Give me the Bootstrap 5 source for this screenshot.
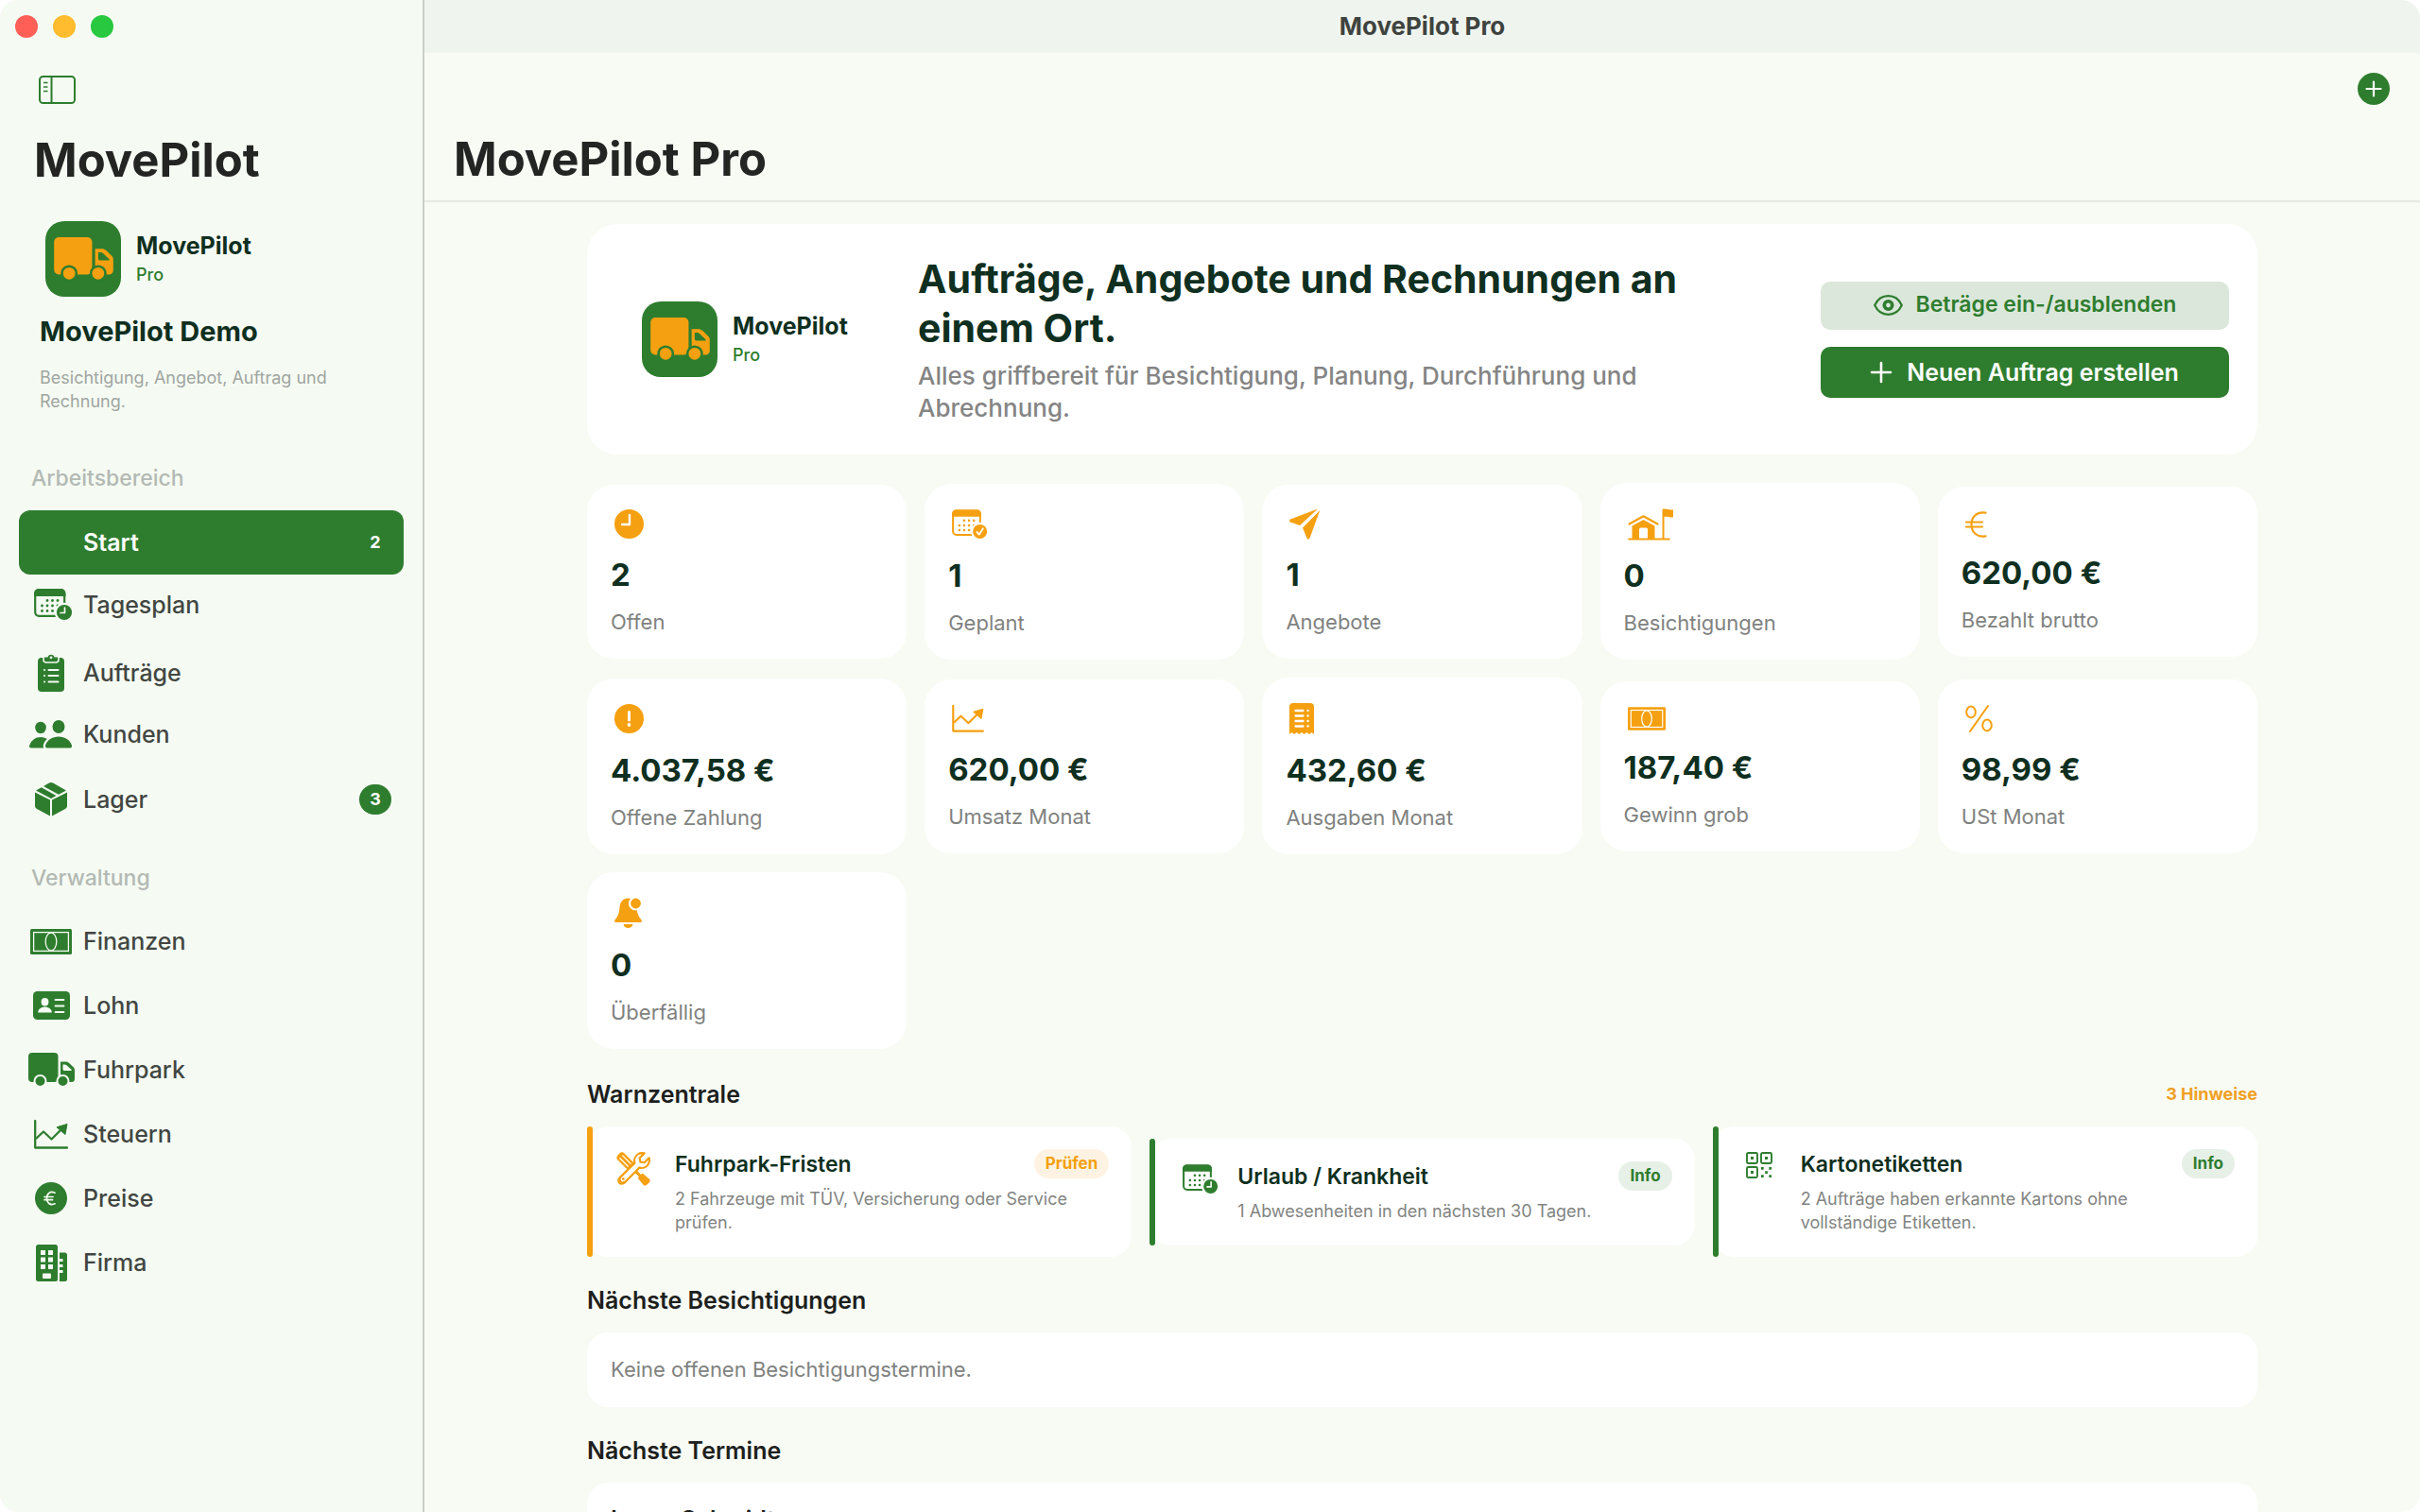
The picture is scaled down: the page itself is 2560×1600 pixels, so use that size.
<!DOCTYPE html>
<html lang="de">
<head>
<meta charset="utf-8">
<meta name="viewport" content="width=device-width, initial-scale=1">
<title>MovePilot Pro</title>
<link rel="stylesheet" href="https://cdn.jsdelivr.net/npm/bootstrap@5.3.0/dist/css/bootstrap.min.css">
<style>
:root{--mp-green:#2e7d2e;--mp-orange:#f5a010;--mp-dark:#0f2f20;--mp-gray:#808280;--mp-side:#f5fbf3;--mp-main:#f8fbf4;--cut:#fff}
body{font-family:Inter,"Liberation Sans",sans-serif;background:#fff;color:#222422;line-height:1.2}
svg{display:block;flex:none;overflow:visible}
.app-window{border-radius:20px;overflow:hidden;background:var(--mp-main)}
.sidebar{width:449px;border-right:2px solid #c9cfc9;background:var(--mp-side);--cut:var(--mp-side)}
.lights{gap:16px;padding:16px 16px 40px}
.light{width:24px;height:24px;border-radius:50%}
.light-r{background:#ff5f57}.light-y{background:#febc2e}.light-g{background:#28c840}
.plain-btn{border:0;background:none;padding:0;color:var(--mp-green)}
.big-title{font-size:49px;font-weight:700;line-height:60px;margin:0;color:#232523}
.app-logo{width:80px;height:80px;border-radius:20px;background:var(--mp-green);color:var(--mp-orange);--cut:var(--mp-green);display:flex;align-items:center;justify-content:center;flex:none}
.logo-name{font-size:25px;font-weight:700;line-height:30px;color:var(--mp-dark)}
.logo-pro{font-size:18px;font-weight:500;line-height:24px;margin-top:4px;color:var(--mp-green)}
.side-tools{padding:0 41px}
.side-title{margin-top:30px;padding:0 36px}
.brand-row{padding:34px 48px 0;gap:16px}
.side-intro{padding:19px 42px 0}
.demo-name{font-size:29px;font-weight:700;line-height:36px;color:var(--mp-dark)}
.side-desc{font-size:18px;line-height:25px;margin-top:18px;color:#a0a5a0}
.side-head{font-size:23px;font-weight:500;line-height:28px;color:#b3b9b3;margin:0;padding:0 33px}
.side-head.head-work{margin-top:55px;margin-bottom:20px}
.side-head.head-admin{margin-top:25px;margin-bottom:19px}
.side-nav{padding:0 20px}
.side-link{height:68px;padding:0 13px 0 9px;gap:9px;border-radius:12px;color:#424642;font-size:25px;font-weight:500;text-decoration:none}
.side-link .ic{width:50px;display:flex;justify-content:center;color:var(--mp-green)}
.side-link.current{background:var(--mp-green);color:#fff;font-weight:600}
.count-pill{min-width:34px;height:32px;border-radius:16px;background:var(--mp-green);color:#fff;font-size:18px;font-weight:700;display:flex;align-items:center;justify-content:center}
.row-mid{height:64px}.row-tall{height:80px}.row-low{height:50px}.row-last{height:88px}
.title-bar{height:56px;background:#eff5ee;font-size:26px;font-weight:700;color:#3f433f}
.page-head{padding:21px 32px 13px 31px;border-bottom:2px solid #e4e9e2}
.content-col{max-width:1767px;width:100%;margin:0 auto;padding-top:23px}
.panel{background:#fff;border-radius:28px}
.hero{padding:30px 30px 30px 58px;border-radius:32px;min-height:244px}
.hero-logo{width:292px}
.hero h2{font-size:41px;font-weight:700;line-height:52px;margin:0 0 8px;color:var(--mp-dark)}
.hero p{font-size:26px;font-weight:500;line-height:34px;margin:0;color:#858585}
.hero-text{max-width:860px}
.hero-btns{width:432px;gap:18px}
.hero-btn{border:0;border-radius:10px;height:51px;font-size:23px;font-weight:600;background:#dbe7db;color:var(--mp-green);gap:14px}
.hero-btn.main-btn{height:54px;background:var(--mp-green);color:#fff;font-size:25px;gap:16px}
.stats{display:grid;grid-template-columns:repeat(5,1fr);gap:19px;margin-top:30px;align-items:center}
.stat{padding:24px 25px}
.stat .ic{color:var(--mp-orange);height:36px;display:flex;align-items:center;margin-bottom:15px}
.stat .ic.h-s{height:32px}.stat .ic.h-l{height:38px}.stat .ic.h-xl{height:39px}
.stat-value{font-size:33px;font-weight:700;line-height:40px;color:var(--mp-dark)}
.stat-label{font-size:22px;line-height:30px;margin-top:15px;color:var(--mp-gray)}
.sec-title{font-size:25px;font-weight:600;line-height:32px;margin:0;color:#1d1f1d}
.sec-head{margin:32px 0 18px}
.list-title{margin:30px 0 18px}
.hint-count{font-size:18px;font-weight:700;color:#f0a024}
.warns{display:grid;grid-template-columns:repeat(3,1fr);gap:19px;align-items:center}
.warn{position:relative;border-radius:22px;padding:24px 24px 24px 31px}
.warn::before{content:"";position:absolute;left:0;top:0;bottom:0;width:6px;border-radius:3px;background:var(--bar,var(--mp-green))}
.warn.alerting{--bar:var(--mp-orange)}
.warn .ic{width:62px;padding-top:3px;color:var(--bar,var(--mp-green))}
.warn h4{font-size:23px;font-weight:600;line-height:32px;margin:0;color:var(--mp-dark)}
.warn p{font-size:18px;line-height:25px;margin:8px 0 0;color:#828482;max-width:430px}
.tag-pill{height:31px;padding:0 12px;border-radius:16px;font-size:17px;font-weight:700;background:#e7f0e7;color:var(--mp-green);display:flex;align-items:center}
.alerting .tag-pill{background:#fef3e3;color:#f5a010}
.list-panel{border-radius:22px;padding:24px 25px;font-size:22px;line-height:31px;color:var(--mp-gray)}
.next-name{font-size:25px;font-weight:600;color:#1d1f1d}
</style>
</head>
<body>
<svg width="0" height="0" class="position-absolute" aria-hidden="true">
<defs>
<symbol id="i-truck" viewBox="0 0 49 36"><rect width="31.500" height="31" rx="4" fill="currentColor"/><path fill="currentColor" d="M34 9.500h5.500c1.400 0 2.400.4 3.400 1.300l4.500 4.200c1.100 1.100 1.600 2 1.600 3.400V27.500a3.500 3.500 0 0 1-3.500 3.500H30v-2h4z"/><path fill="var(--cut)" d="M36.500 12.500h1.800c1 0 1.700.3 2.400 1l5 4.600v1H38a1.500 1.500 0 0 1-1.500-1.500z"/><g fill="currentColor" stroke="var(--cut)" stroke-width="2"><circle cx="12.500" cy="30" r="6"/><circle cx="36.500" cy="30" r="6"/></g></symbol>
<symbol id="i-cal" viewBox="0 0 34 30"><rect x="1.200" y="1.200" width="31" height="27.600" rx="4" fill="none" stroke="currentColor" stroke-width="2.200"/><path fill="currentColor" d="M0 8V5a5 5 0 0 1 5-5h23.500a5 5 0 0 1 5 5v3z"/><g fill="currentColor"><circle cx="14" cy="12.500" r="1.400"/><circle cx="19.500" cy="12.500" r="1.400"/><circle cx="25" cy="12.500" r="1.400"/><circle cx="8.500" cy="18" r="1.400"/><circle cx="14" cy="18" r="1.400"/><circle cx="19.500" cy="18" r="1.400"/><circle cx="25" cy="18" r="1.400"/><circle cx="8.500" cy="23.500" r="1.400"/><circle cx="14" cy="23.500" r="1.400"/><circle cx="19.500" cy="23.500" r="1.400"/></g></symbol>
<symbol id="i-calclock" viewBox="0 0 41 34"><use href="#i-cal" width="34" height="30"/><circle cx="32" cy="25" r="9.200" fill="currentColor" stroke="var(--cut)" stroke-width="2.200"/><path d="M32.500 20v5.500H28" fill="none" stroke="var(--cut)" stroke-width="1.700" stroke-linecap="round" stroke-linejoin="round"/></symbol>
<symbol id="i-calcheck" viewBox="0 0 41 34"><use href="#i-cal" width="34" height="30"/><circle cx="32" cy="25" r="9.200" fill="currentColor" stroke="var(--cut)" stroke-width="2.200"/><path d="M28.500 25.500l2.500 3 4.500-7" fill="none" stroke="var(--cut)" stroke-width="1.900" stroke-linecap="round" stroke-linejoin="round"/></symbol>
<symbol id="i-clip" viewBox="0 0 28 40"><rect y="4" width="28" height="36" rx="4" fill="currentColor"/><path d="M6 2v4a3 3 0 0 0 3 3h10a3 3 0 0 0 3-3V2" fill="none" stroke="var(--cut)" stroke-width="1.600"/><path fill="currentColor" d="M7 3.500h3.500a3.600 3.600 0 0 1 7 0H21v2.200a2.200 2.200 0 0 1-2.200 2.200H9.200A2.200 2.200 0 0 1 7 5.700z"/><circle cx="14" cy="3.800" r="1.400" fill="var(--cut)"/><g stroke="var(--cut)" stroke-width="2" stroke-linecap="round"><path d="M11.500 17h10M11.500 23h10M11.500 29.500h10M7 17h.1M7 23h.1M7 29.500h.1"/></g></symbol>
<symbol id="i-people" viewBox="0 0 46 30"><ellipse cx="12" cy="8" rx="5.800" ry="6.200" fill="currentColor"/><path fill="currentColor" d="M2 29.500c-2 0-2.400-1.500-1.500-3.500C2.500 21.500 6.500 18 12 18c2.600 0 5 .7 6.800 2-2 1.700-3.600 4.200-4 6.500-.2 1.200 0 2.200.6 3z"/><ellipse cx="31" cy="7" rx="6.500" ry="7" fill="currentColor"/><path fill="currentColor" d="M19 29.500c-2 0-2.500-1.500-1.700-3.500C19 21.500 24 17.500 31 17.500S43 21.500 44.700 26c.8 2 .3 3.500-1.700 3.500z"/></symbol>
<symbol id="i-box" viewBox="0 0 34 36"><path fill="currentColor" d="M0 10.500l16 8V35.500L2 28a3.500 3.500 0 0 1-2-3zM34 10.500l-16 8V35.500L32 28a3.500 3.500 0 0 0 2-3z"/><path fill="currentColor" d="M1 8.600l5.800-3.300L22.500 14 17 17zM9 4l5.500-3.200a5 5 0 0 1 5 0L33 8.600 25 12.800z"/></symbol>
<symbol id="i-money" viewBox="0 0 44 27"><rect width="44" height="27" rx="1.500" fill="currentColor"/><rect x="3.600" y="3.600" width="36.800" height="19.800" fill="none" stroke="var(--cut)" stroke-width="1.300"/><ellipse cx="22" cy="13.500" rx="5.800" ry="9.500" fill="currentColor" stroke="var(--cut)" stroke-width="1.300"/></symbol>
<symbol id="i-idcard" viewBox="0 0 39 30"><rect width="39" height="30" rx="4.500" fill="currentColor"/><g fill="var(--cut)"><ellipse cx="12.500" cy="11.300" rx="3.900" ry="4.200"/><path d="M5.200 22.500c0-3.600 3.300-6 7.300-6s7.300 2.400 7.300 6z"/></g><path d="M23.500 9h9M23.500 15.500h9M23.500 22h9" stroke="var(--cut)" stroke-width="1.800" stroke-linecap="round"/></symbol>
<symbol id="i-chart" viewBox="0 0 36 31"><path d="M1.200 1v28.500H35" fill="none" stroke="currentColor" stroke-width="2.300" stroke-linecap="round" stroke-linejoin="round"/><path d="M2 20l8-7.500 8.500 8L30 9" fill="none" stroke="currentColor" stroke-width="2.300" stroke-linejoin="round"/><path fill="currentColor" stroke="currentColor" stroke-linejoin="round" d="M24 7.800L35 4.500 33 15.500z"/></symbol>
<symbol id="i-eurocoin" viewBox="0 0 34 34"><circle cx="17" cy="17" r="17" fill="currentColor"/><path d="M21 11.200c-5-2.200-8.500 1-8.500 5.800s3.500 8 8.500 5.800M10 15.500h9M10 18.700h8.500" fill="none" stroke="var(--cut)" stroke-width="1.700" stroke-linecap="round"/></symbol>
<symbol id="i-building" viewBox="0 0 33 39"><rect width="23" height="39" rx="2.500" fill="currentColor"/><g fill="var(--cut)"><path d="M5 6h5v5H5zM13 6h5v5h-5zM5 13.500h5v5H5zM13 13.500h5v5h-5zM5 21h5v5H5zM13 21h5v5h-5z"/><rect x="7" y="30.500" width="9" height="5.500" rx="1"/></g><path fill="currentColor" d="M25 8.500h5.500A2.500 2.500 0 0 1 33 11v25.500a2.500 2.500 0 0 1-2.500 2.500H25v-9h3.500v-3H25v-3h3.500v-3H25v-3h3.500v-3H25z"/></symbol>
<symbol id="i-clock" viewBox="0 0 31 31"><circle cx="15.500" cy="15.500" r="15.500" fill="currentColor"/><path d="M16 6v10H8" fill="none" stroke="#fff" stroke-width="2.400" stroke-linecap="round" stroke-linejoin="round"/></symbol>
<symbol id="i-alert" viewBox="0 0 31 31"><circle cx="15.500" cy="15.500" r="15.500" fill="currentColor"/><path d="M15.500 8.500v8.500" stroke="#fff" stroke-width="3" stroke-linecap="round"/><circle cx="15.500" cy="22" r="1.900" fill="#fff"/></symbol>
<symbol id="i-plane" viewBox="0 0 33 33"><path fill="currentColor" d="M30 .6L1 11.500c-1.300.7-1.300 2.200 0 2.900L11 18zM32.300 2L21.500 31.500c-.7 1.600-2.500 1.500-3 0L14 20.500z"/></symbol>
<symbol id="i-house" viewBox="0 0 49 34"><g fill="none" stroke="currentColor" stroke-linecap="round"><path d="M1.500 16.500L16.500 8.300l15 8.200" stroke-width="2.200" stroke-linejoin="round"/><path d="M1.200 32.600h42.500" stroke-width="2"/><path d="M37.500 1.500v30.500" stroke-width="2"/></g><path fill="currentColor" d="M4.500 18.500l12-6.500 12 6.500v13.500H21V22a1.500 1.500 0 0 0-1.500-1.500h-6A1.500 1.500 0 0 0 12 22v10H4.500zM37.500.8c3.500-1.400 6.500 1.400 10.500.4v8c-4 1-7-1.400-10.500 0z"/></symbol>
<symbol id="i-euro" viewBox="0 0 23 28"><path d="M21.500 1.700C12 .2 6.500 6 6.500 14S12 27.800 21.500 26.300M1 11.500h17M1 16.500h17" fill="none" stroke="currentColor" stroke-width="2.200" stroke-linecap="round"/></symbol>
<symbol id="i-receipt" viewBox="0 0 26 33"><path fill="currentColor" d="M0 33V4a4 4 0 0 1 4-4h18a4 4 0 0 1 4 4v29l-2.500-2-2.500 2-2.700-2-2.600 2-2.700-2-2.700 2-2.600-2L5 33l-2.500-2z"/><path d="M6.500 8h8M6.500 13.500h8M6.500 19h8M6.500 24.500h8M19.500 8h.2M19.500 13.500h.2M19.500 19h.2M19.500 24.500h.2" stroke="#fff" stroke-width="2.300" stroke-linecap="round"/></symbol>
<symbol id="i-percent" viewBox="0 0 29 29"><g fill="none" stroke="currentColor" stroke-width="2"><ellipse cx="6" cy="7.500" rx="4.800" ry="6"/><ellipse cx="23" cy="21.500" rx="4.800" ry="6"/><path d="M24 1L5 28" stroke-linecap="round"/></g></symbol>
<symbol id="i-bell" viewBox="0 0 29 33"><path fill="currentColor" d="M14.500.5c5.500 0 8.500 4 9 9.500.5 6 1.500 9 4.700 13 1.400 2 .6 3-.9 3H1.700c-1.500 0-2.300-1-.9-3C4 19 5 16 5.500 10c.5-5.500 3.500-9.500 9-9.500zM9.500 28h10c-.5 2.500-2.500 4-5 4s-4.500-1.500-5-4z"/><circle cx="22.500" cy="6" r="6.500" fill="currentColor" stroke="#fff" stroke-width="2.200"/></symbol>
<symbol id="i-tools" viewBox="0 0 36 36"><g transform="rotate(-45 18 18)"><rect x="13" y="-4" width="10" height="20" rx="4" fill="currentColor"/><path d="M16 0v12M20 0v12" stroke="#fff" stroke-width="1.300" stroke-linecap="round"/><path fill="currentColor" d="M16.500 16h3v12h2l1 10a3 3 0 0 1-3 2h-3a3 3 0 0 1-3-2l1-10h2z"/></g><g transform="rotate(45 18 18)"><path d="M14.500 12.500C11 10.500 9.500 6.500 10.500 3c.6-2.200 2-3.800 4-5v7l3.500 2.500L21.500 5v-7c2 1.200 3.400 2.800 4 5 1 3.500-.5 7.500-4 9.500v20.500a3.500 4 0 0 1-7 3z" fill="#fff" stroke="currentColor" stroke-width="2.200" stroke-linejoin="round"/><path d="M14.500 15v18.500a3.500 3.500 0 0 0 7 0V15z" fill="#fff" stroke="none"/><path d="M14.500 13v20.500a3.500 3.500 0 0 0 7 0V13" fill="none" stroke="currentColor" stroke-width="2.200"/><circle cx="18" cy="33" r="1.400" fill="currentColor"/></g></symbol>
<symbol id="i-qr" viewBox="0 0 28 28"><g fill="none" stroke="currentColor" stroke-width="1.900"><rect x="1" y="1" width="11" height="11" rx="1.500"/><rect x="16" y="1" width="11" height="11" rx="1.500"/><rect x="1" y="16" width="11" height="11" rx="1.500"/></g><path fill="currentColor" d="M5 5h3v3H5zM20 5h3v3h-3zM5 20h3v3H5zM16 16h2.700v2.700H16zM24.300 16H27v2.700h-2.700zM20.200 20.200h2.700v2.700h-2.700zM16 24.300h2.700V27H16zM24.300 24.300H27V27h-2.700z"/></symbol>
</defs>
</svg>

<div class="app-window d-flex vh-100">
<aside class="sidebar flex-shrink-0">
  <div class="lights d-flex"><span class="light light-r"></span><span class="light light-y"></span><span class="light light-g"></span></div>
  <div class="side-tools">
    <button class="plain-btn d-block" type="button" aria-label="Seitenleiste">
      <svg width="39" height="30" viewBox="0 0 39 30" fill="none" stroke="currentColor" stroke-width="2"><rect x="1" y="1" width="37" height="28" rx="3.500"/><path d="M13.500 1v28"/><path d="M5 7.500h4.500M5 12h4.500M5 16.500h4.500" stroke-width="1.600"/></svg>
    </button>
  </div>
  <h1 class="big-title side-title">MovePilot</h1>
  <div class="d-flex align-items-center brand-row">
    <div class="app-logo"><svg width="63" height="46"><use href="#i-truck"/></svg></div>
    <div><div class="logo-name">MovePilot</div><div class="logo-pro">Pro</div></div>
  </div>
  <div class="side-intro">
    <div class="demo-name">MovePilot Demo</div>
    <div class="side-desc">Besichtigung, Angebot, Auftrag und Rechnung.</div>
  </div>
  <h2 class="side-head head-work">Arbeitsbereich</h2>
  <nav class="side-nav">
    <a href="#" class="side-link current d-flex align-items-center" aria-current="page"><span class="ic"></span><span class="flex-grow-1">Start</span><span class="count-pill">2</span></a>
    <a href="#" class="side-link row-mid d-flex align-items-center"><span class="ic"><svg class="ms-1" width="41" height="34"><use href="#i-calclock"/></svg></span>Tagesplan</a>
    <a href="#" class="side-link row-tall d-flex align-items-center"><span class="ic"><svg width="28" height="40"><use href="#i-clip"/></svg></span>Aufträge</a>
    <a href="#" class="side-link row-low d-flex align-items-center"><span class="ic"><svg width="46" height="30"><use href="#i-people"/></svg></span>Kunden</a>
    <a href="#" class="side-link row-last d-flex align-items-center"><span class="ic"><svg width="34" height="36"><use href="#i-box"/></svg></span><span class="flex-grow-1">Lager</span><span class="count-pill">3</span></a>
  </nav>
  <h2 class="side-head head-admin">Verwaltung</h2>
  <nav class="side-nav">
    <a href="#" class="side-link d-flex align-items-center"><span class="ic"><svg width="44" height="27"><use href="#i-money"/></svg></span>Finanzen</a>
    <a href="#" class="side-link d-flex align-items-center"><span class="ic"><svg width="39" height="30"><use href="#i-idcard"/></svg></span>Lohn</a>
    <a href="#" class="side-link d-flex align-items-center"><span class="ic"><svg width="49" height="36"><use href="#i-truck"/></svg></span>Fuhrpark</a>
    <a href="#" class="side-link d-flex align-items-center"><span class="ic"><svg width="36" height="31"><use href="#i-chart"/></svg></span>Steuern</a>
    <a href="#" class="side-link d-flex align-items-center"><span class="ic"><svg width="34" height="34"><use href="#i-eurocoin"/></svg></span>Preise</a>
    <a href="#" class="side-link d-flex align-items-center"><span class="ic"><svg width="33" height="39"><use href="#i-building"/></svg></span>Firma</a>
  </nav>
</aside>
<main class="flex-grow-1 d-flex flex-column overflow-hidden">
  <div class="title-bar d-flex align-items-center justify-content-center flex-shrink-0">MovePilot Pro</div>
  <header class="page-head flex-shrink-0">
    <div class="d-flex justify-content-end">
      <button class="plain-btn" type="button" aria-label="Hinzufügen"><svg width="34" height="34" viewBox="0 0 34 34"><circle cx="17" cy="17" r="17" fill="currentColor"/><path d="M17 9.500v15M9.500 17h15" stroke="#fff" stroke-width="2.200" stroke-linecap="round"/></svg></button>
    </div>
    <h1 class="big-title mt-4 pt-1">MovePilot Pro</h1>
  </header>
  <div class="content-col flex-shrink-0">
    <section class="panel hero d-flex align-items-center">
      <div class="hero-logo d-flex align-items-center gap-3 flex-shrink-0">
        <div class="app-logo"><svg width="63" height="46"><use href="#i-truck"/></svg></div>
        <div><div class="logo-name">MovePilot</div><div class="logo-pro">Pro</div></div>
      </div>
      <div class="hero-text me-auto">
        <h2>Aufträge, Angebote und Rechnungen an einem Ort.</h2>
        <p>Alles griffbereit für Besichtigung, Planung, Durchführung und Abrechnung.</p>
      </div>
      <div class="hero-btns d-flex flex-column flex-shrink-0">
        <button type="button" class="hero-btn d-flex align-items-center justify-content-center"><svg width="31" height="22" viewBox="0 0 31 22"><path d="M1.200 11C4 5 9 1.200 15.500 1.200S27 5 29.800 11C27 17 22 20.800 15.500 20.800S4 17 1.200 11z" fill="none" stroke="currentColor" stroke-width="2.200"/><circle cx="15.500" cy="11" r="4.200" fill="none" stroke="currentColor" stroke-width="3.600"/></svg>Beträge ein-/ausblenden</button>
        <button type="button" class="hero-btn main-btn d-flex align-items-center justify-content-center"><svg width="22" height="22" viewBox="0 0 22 22"><path d="M11 1v20M1 11h20" stroke="currentColor" stroke-width="2.600" stroke-linecap="round"/></svg>Neuen Auftrag erstellen</button>
      </div>
    </section>

    <section class="stats">
      <div class="panel stat"><div class="ic"><svg class="ms-1" width="31" height="31"><use href="#i-clock"/></svg></div><div class="stat-value">2</div><div class="stat-label">Offen</div></div>
      <div class="panel stat"><div class="ic h-l"><svg class="ms-1" width="38" height="32"><use href="#i-calcheck"/></svg></div><div class="stat-value">1</div><div class="stat-label">Geplant</div></div>
      <div class="panel stat"><div class="ic"><svg class="ms-1" width="33" height="33"><use href="#i-plane"/></svg></div><div class="stat-value">1</div><div class="stat-label">Angebote</div></div>
      <div class="panel stat"><div class="ic h-xl"><svg class="ms-1" width="49" height="34"><use href="#i-house"/></svg></div><div class="stat-value">0</div><div class="stat-label">Besichtigungen</div></div>
      <div class="panel stat"><div class="ic h-s"><svg class="ms-1" width="23" height="28"><use href="#i-euro"/></svg></div><div class="stat-value">620,00 €</div><div class="stat-label">Bezahlt brutto</div></div>
      <div class="panel stat"><div class="ic h-l"><svg class="ms-1" width="31" height="31"><use href="#i-alert"/></svg></div><div class="stat-value">4.037,58 €</div><div class="stat-label">Offene Zahlung</div></div>
      <div class="panel stat"><div class="ic"><svg class="ms-1" width="34" height="29"><use href="#i-chart"/></svg></div><div class="stat-value">620,00 €</div><div class="stat-label">Umsatz Monat</div></div>
      <div class="panel stat"><div class="ic h-xl"><svg class="ms-1" width="26" height="33"><use href="#i-receipt"/></svg></div><div class="stat-value">432,60 €</div><div class="stat-label">Ausgaben Monat</div></div>
      <div class="panel stat"><div class="ic h-s"><svg class="ms-1" width="40" height="25"><use href="#i-money"/></svg></div><div class="stat-value">187,40 €</div><div class="stat-label">Gewinn grob</div></div>
      <div class="panel stat"><div class="ic"><svg class="ms-1" width="29" height="29"><use href="#i-percent"/></svg></div><div class="stat-value">98,99 €</div><div class="stat-label">USt Monat</div></div>
      <div class="panel stat"><div class="ic h-xl"><svg class="ms-1" width="29" height="33"><use href="#i-bell"/></svg></div><div class="stat-value">0</div><div class="stat-label">Überfällig</div></div>
    </section>

    <div class="sec-head d-flex justify-content-between align-items-center">
      <h3 class="sec-title">Warnzentrale</h3><span class="hint-count">3 Hinweise</span>
    </div>
    <section class="warns">
      <div class="panel warn alerting d-flex align-items-start"><div class="ic flex-shrink-0"><svg width="36" height="36"><use href="#i-tools"/></svg></div>
        <div class="flex-grow-1"><div class="d-flex justify-content-between"><h4>Fuhrpark-Fristen</h4><span class="tag-pill">Prüfen</span></div><p>2 Fahrzeuge mit TÜV, Versicherung oder Service prüfen.</p></div></div>
      <div class="panel warn d-flex align-items-start"><div class="ic flex-shrink-0"><svg class="ms-1" width="38" height="32"><use href="#i-calclock"/></svg></div>
        <div class="flex-grow-1"><div class="d-flex justify-content-between"><h4>Urlaub / Krankheit</h4><span class="tag-pill">Info</span></div><p>1 Abwesenheiten in den nächsten 30 Tagen.</p></div></div>
      <div class="panel warn d-flex align-items-start"><div class="ic flex-shrink-0"><svg class="ms-1" width="28" height="28"><use href="#i-qr"/></svg></div>
        <div class="flex-grow-1"><div class="d-flex justify-content-between"><h4>Kartonetiketten</h4><span class="tag-pill">Info</span></div><p>2 Aufträge haben erkannte Kartons ohne vollständige Etiketten.</p></div></div>
    </section>

    <h3 class="sec-title list-title">Nächste Besichtigungen</h3>
    <div class="panel list-panel">Keine offenen Besichtigungstermine.</div>
    <h3 class="sec-title list-title">Nächste Termine</h3>
    <div class="panel list-panel"><div class="next-name">Laura Schmidt</div></div>
  </div>
</main>
</div>
<script src="https://cdn.jsdelivr.net/npm/bootstrap@5.3.0/dist/js/bootstrap.bundle.min.js"></script>
</body>
</html>
